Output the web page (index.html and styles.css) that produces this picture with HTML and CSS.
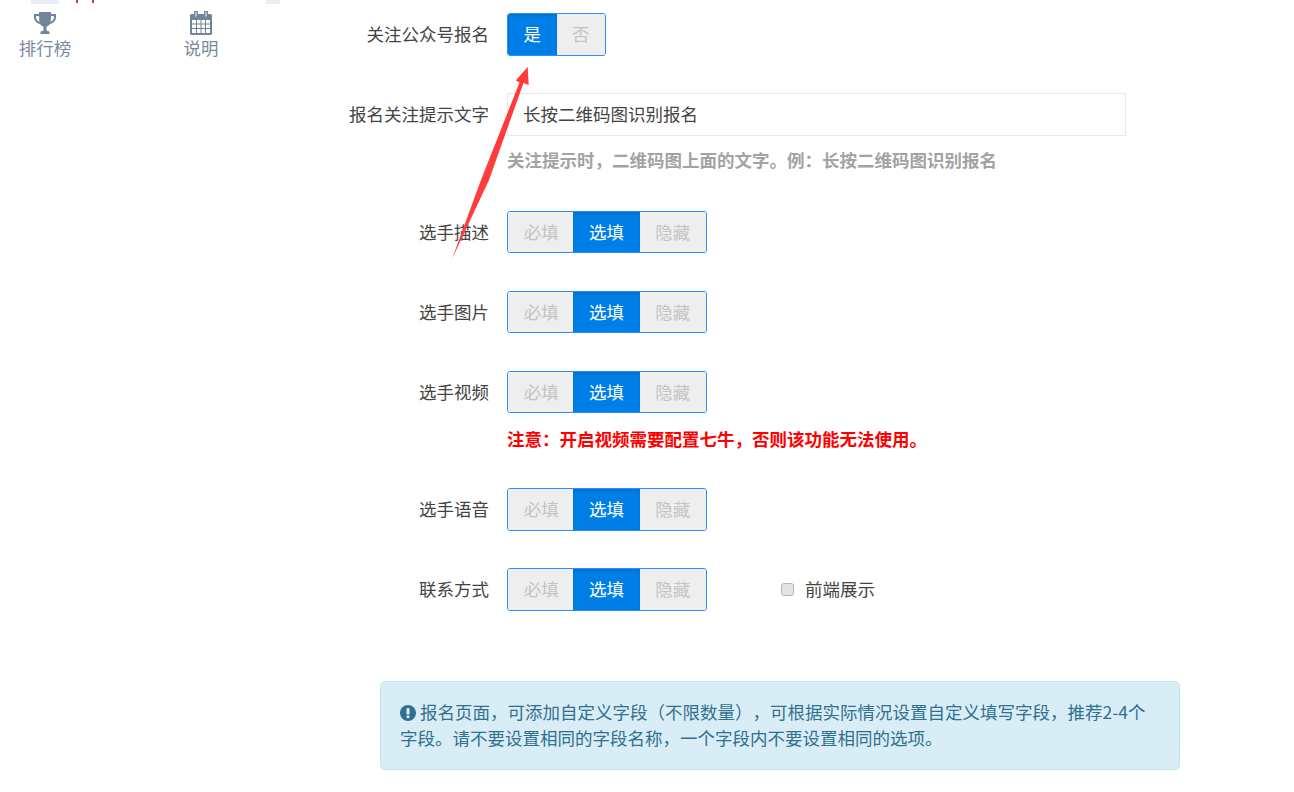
FILE: index.html
```html
<!DOCTYPE html>
<html lang="zh-CN">
<head>
  <meta charset="UTF-8" />
  <title>报名设置</title>
  <link rel="stylesheet" href="styles.css">
</head>
<body>
  <div class="page">
    <div class="sidebar">
      <div class="strip">
        <span class="strip-bar bar-a"></span>
        <span class="strip-dot dot-a"></span>
        <span class="strip-dot dot-b"></span>
        <span class="strip-bar bar-b"></span>
      </div>
      <div class="tabs">
        <div class="tab">
          <svg class="tab-icon" viewBox="0 0 24 24" width="24" height="24">
            <path d="M6 1h12v2h5v3c0 4-3 6.500-6 7-1 1.500-2.300 2.300-3.500 2.600V19c0 .8 1 1.200 3 1.500V23H7.500v-2.500c2-.3 3-.7 3-1.500v-3.400C9.300 15.300 8 14.500 7 13c-3-.5-6-3-6-7V3h5V1zM3 5v1c0 2.500 1.500 4 3.600 4.800C6.200 9 6 7 6 5H3zm18 0h-3c0 2-.2 4-.6 5.800C19.500 10 21 8.500 21 6V5z"/>
          </svg>
          <span>排行榜</span>
        </div>
        <div class="tab">
          <svg class="tab-icon" viewBox="0 0 24 24" width="24" height="24">
            <path d="M2.500 3H5V1.500a2 2 0 0 1 4 0V3h6V1.500a2 2 0 0 1 4 0V3h2.500A1.500 1.500 0 0 1 23 4.500v18a1.500 1.500 0 0 1-1.500 1.500h-19A1.500 1.500 0 0 1 1 22.500v-18A1.500 1.500 0 0 1 2.500 3zM6.500 1.200v4.300h1V1.200h-1zm10 0v4.300h1V1.200h-1zM3 9v13h18V9H3z"/>
            <path d="M3 12.500h18v1H3zM3 17h18v1H3zM7 9h1v13H7zM11.500 9h1v13h-1zM16 9h1v13h-1z"/>
          </svg>
          <span>说明</span>
        </div>
      </div>
    </div>

    <div class="main">
      <div class="row row-follow">
        <label class="row-label">关注公众号报名</label>
        <div class="toggle toggle-two">
          <span class="opt on">是</span>
          <span class="opt">否</span>
        </div>
      </div>

      <div class="row row-tip">
        <label class="row-label">报名关注提示文字</label>
        <input class="text-input" type="text" value="长按二维码图识别报名" />
      </div>
      <p class="help">关注提示时，二维码图上面的文字。例：长按二维码图识别报名</p>

      <div class="row row-field">
        <label class="row-label">选手描述</label>
        <div class="toggle">
          <span class="opt">必填</span><span class="opt on">选填</span><span class="opt">隐藏</span>
        </div>
      </div>
      <div class="row row-field">
        <label class="row-label">选手图片</label>
        <div class="toggle">
          <span class="opt">必填</span><span class="opt on">选填</span><span class="opt">隐藏</span>
        </div>
      </div>
      <div class="row row-field">
        <label class="row-label">选手视频</label>
        <div class="toggle">
          <span class="opt">必填</span><span class="opt on">选填</span><span class="opt">隐藏</span>
        </div>
      </div>
      <p class="warn">注意：开启视频需要配置七牛，否则该功能无法使用。</p>
      <div class="row row-voice">
        <label class="row-label">选手语音</label>
        <div class="toggle toggle-tall">
          <span class="opt">必填</span><span class="opt on">选填</span><span class="opt">隐藏</span>
        </div>
      </div>
      <div class="row row-contact">
        <label class="row-label">联系方式</label>
        <div class="toggle toggle-tall">
          <span class="opt">必填</span><span class="opt on">选填</span><span class="opt">隐藏</span>
        </div>
        <div class="check">
          <span class="check-box"></span>
          <span class="check-text">前端展示</span>
        </div>
      </div>

      <div class="alert">
        <svg class="alert-icon" viewBox="0 0 16 16" width="16" height="16">
          <circle cx="8" cy="8" r="8" fill="#31708f"/>
          <rect x="6.500" y="3" width="3" height="6.500" rx="1" fill="#d9edf7"/>
          <rect x="6.500" y="10.500" width="3" height="2.500" rx=".8" fill="#d9edf7"/>
        </svg>
        报名页面，可添加自定义字段（不限数量），可根据实际情况设置自定义填写字段，推荐2-4个字段。请不要设置相同的字段名称，一个字段内不要设置相同的选项。
      </div>
    </div>
  </div>

  <svg class="arrow" viewBox="0 0 1294 792" width="1294" height="792">
    <polygon points="527.700,67 515.700,80.500 519.500,82.500 481,180 452,259 489,180 523.500,83 528.700,85" fill="#ff3b3b"/>
  </svg>
</body>
</html>
```

FILE: styles.css
```css
body {
  margin: 0;
  font-family: "Noto Sans CJK SC", "Liberation Sans", sans-serif;
  font-size: 17.5px;
  color: #444;
  background: #fff;
  text-spacing-trim: space-all;
}
.page {
  display: flex;
  width: 1294px;
  height: 792px;
  overflow: hidden;
}
.sidebar {
  width: 340px;
  flex: none;
}
.strip {
  display: flex;
  height: 4px;
  margin-left: 31px;
}
.strip-bar {
  height: 4px;
  background: #ebedf2;
}
.bar-a {
  width: 28px;
}
.bar-b {
  width: 14px;
  margin-left: 172px;
}
.strip-dot {
  width: 2px;
  height: 3px;
  background: #a5552f;
}
.dot-a {
  margin-left: 17px;
}
.dot-b {
  margin-left: 14px;
  background: #a5552f;
}
.tabs {
  display: flex;
  gap: 66px;
  margin-top: 7px;
}
.tab {
  width: 90px;
  display: flex;
  flex-direction: column;
  align-items: center;
  color: #7a8a9e;
  line-height: 26px;
}
.tab-icon {
  fill: #72849a;
}
.main {
  flex: 1;
  padding-top: 13px;
}
.row {
  display: flex;
  align-items: center;
}
.row-label {
  width: 149px;
  margin-right: 18px;
  padding-bottom: 2px;
  text-align: right;
  flex: none;
}
.row-tip {
  margin-top: 37px;
}
.row-field {
  margin-top: 38px;
}
.row-voice {
  margin-top: 35px;
}
.row-contact {
  margin-top: 37px;
}
.toggle {
  display: flex;
  width: 200px;
  height: 42px;
  box-sizing: border-box;
  border: 1px solid #2b8ff5;
  border-radius: 3px;
  overflow: hidden;
}
.toggle-tall {
  height: 43px;
}
.toggle-two {
  width: 99px;
  height: 43px;
}
.opt {
  flex: 1;
  display: flex;
  align-items: center;
  justify-content: center;
  padding-bottom: 2px;
  background: #eeeeee;
  color: #c4c4c4;
}
.opt.on {
  background: #007ee8;
  color: #fff;
  box-shadow: inset 0 2px 3px rgba(0, 0, 0, 0.12);
}
.toggle:not(.toggle-two) .opt.on {
  margin-left: -1px;
}
.text-input {
  width: 619px;
  height: 43px;
  box-sizing: border-box;
  border: 1px solid #e8e8e8;
  padding: 0 15px 2px;
  font: inherit;
  color: #444;
  outline: none;
}
.help {
  margin: 11px 0 0 167px;
  line-height: 26px;
  font-weight: 700;
  color: #a3a3a3;
}
.help + .row-field {
  margin-top: 38px;
}
.warn {
  margin: 13px 0 0 167px;
  line-height: 26px;
  font-weight: 700;
  color: #f00;
}
.warn + .row-voice {
  margin-top: 36px;
}
.check {
  display: flex;
  align-items: center;
  gap: 11px;
  margin-left: 74px;
}
.check-text {
  padding-bottom: 2px;
}
.check-box {
  width: 13px;
  height: 13px;
  box-sizing: border-box;
  border: 1px solid #b5b5b5;
  border-radius: 3px;
  background: #e4e4e4;
}
.alert {
  width: 800px;
  box-sizing: border-box;
  margin: 70px 0 0 40px;
  padding: 17px 19px 18px;
  border: 1px solid #bce8f1;
  border-radius: 5px;
  background: #d9edf7;
  color: #31708f;
  line-height: 26px;
}
.alert-icon {
  vertical-align: -2px;
}
.arrow {
  position: absolute;
  left: 0;
  top: 0;
  pointer-events: none;
}
```
